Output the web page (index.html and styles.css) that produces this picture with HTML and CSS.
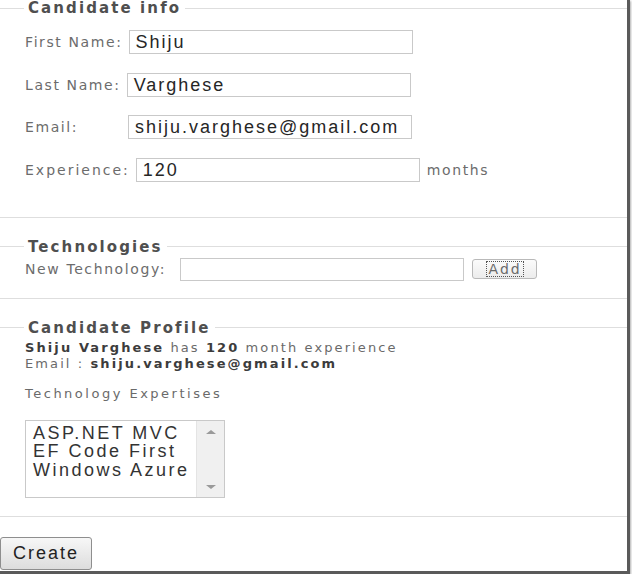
FILE: index.html
```html
<!DOCTYPE html>
<html>
<head>
<meta charset="utf-8">
<title>Candidate</title>
<link rel="stylesheet" href="styles.css">
</head>
<body>
<div class="frame">
  <fieldset class="group group-info">
    <legend class="legend">Candidate info</legend>
    <div class="row">
      <span class="label">First Name:</span>
      <span class="field">Shiju</span>
    </div>
    <div class="row">
      <span class="label">Last Name:</span>
      <span class="field">Varghese</span>
    </div>
    <div class="row">
      <span class="label label-email">Email:</span>
      <span class="field">shiju.varghese@gmail.com</span>
    </div>
    <div class="row">
      <span class="label label-exp">Experience:</span>
      <span class="field">120</span>
      <span class="label unit">months</span>
    </div>
  </fieldset>

  <fieldset class="group group-tech">
    <legend class="legend">Technologies</legend>
    <div class="row row-tech">
      <span class="label">New Technology:</span>
      <span class="field field-tech"></span>
      <span class="add-btn"><span class="add-focus">Add</span></span>
    </div>
  </fieldset>

  <fieldset class="group group-profile">
    <legend class="legend">Candidate Profile</legend>
    <p class="profile-line"><b class="strong">Shiju Varghese</b> has <b class="strong">120</b> month experience</p>
    <p class="profile-line">Email : <b class="strong">shiju.varghese@gmail.com</b></p>
    <p class="profile-sub">Technology Expertises</p>
    <div class="listbox">
      <div class="list-items">
        <div class="list-item">ASP.NET MVC</div>
        <div class="list-item">EF Code First</div>
        <div class="list-item">Windows Azure</div>
      </div>
      <div class="scrollbar">
        <span class="arrow arrow-up"></span>
        <span class="arrow arrow-down"></span>
      </div>
    </div>
  </fieldset>

  <div class="actions">
    <span class="create-btn">Create</span>
  </div>
</div>
</body>
</html>
```

FILE: styles.css
```css
html, body {
  margin: 0;
  padding: 0;
  background: #ffffff;
}

.frame {
  width: 627px;
  height: 571px;
  background: #ffffff;
  border-right: 3px solid #5a5a5a;
  border-bottom: 3px solid #5a5a5a;
  box-shadow: 1px 1px 2px #b0b0b0;
  overflow: hidden;
  font-family: "DejaVu Sans", Verdana, sans-serif;
}

.group {
  margin: 0;
  padding: 0 0 0 25px;
  border: none;
  border-top: 1px solid #dedede;
  border-bottom: 1px solid #dedede;
  min-width: 0;
}

.legend {
  margin-left: -1px;
  padding: 0 4px;
  font-family: "DejaVu Sans", Verdana, sans-serif;
  font-weight: bold;
  font-size: 15px;
  line-height: 16px;
  letter-spacing: 2.1px;
  color: #4f4f4f;
}

.group-info {
  padding-bottom: 35px;
}

.group-tech {
  margin-top: 21px;
  padding-bottom: 17px;
}

.group-profile {
  margin-top: 21px;
  padding-bottom: 18px;
}

.row {
  display: flex;
  align-items: center;
  height: 24px;
  margin-top: 18.5px;
}

.group-info .row:first-of-type {
  margin-top: 14px;
}

.row-tech {
  margin-top: 3px;
  height: 23px;
}

.label {
  font-size: 14px;
  letter-spacing: 1.6px;
  color: #6c6c6c;
  white-space: nowrap;
}

.label-email {
  width: 97px;
}

.label-exp {
  letter-spacing: 2px;
}

.unit {
  margin-left: 7px;
}

.field {
  box-sizing: border-box;
  width: 284px;
  height: 24px;
  margin-left: 6px;
  padding: 0 6px;
  border: 1px solid #c9c9c9;
  background: #ffffff;
  font-family: "Liberation Sans", Arial, sans-serif;
  font-size: 18px;
  line-height: 22px;
  letter-spacing: 2px;
  color: #262626;
  white-space: nowrap;
}

.field-tech {
  height: 23px;
  margin-left: 14px;
}

.add-btn {
  box-sizing: border-box;
  display: flex;
  align-items: center;
  justify-content: center;
  width: 65px;
  height: 20px;
  margin-left: 8px;
  border: 1px solid #b9b9b9;
  border-radius: 3px;
  background: linear-gradient(#fbfbfb, #ececec);
}

.add-focus {
  padding: 0 1px 0 2px;
  border: 1px dotted #555555;
  font-size: 14px;
  line-height: 14px;
  letter-spacing: 2px;
  color: #6a6a6a;
}

.profile-line {
  margin: 0;
  font-size: 13px;
  line-height: 16px;
  letter-spacing: 2.1px;
  color: #6a6a6a;
}

.profile-line:first-of-type {
  margin-top: 4px;
}

.strong {
  font-weight: bold;
  color: #3c3c3c;
}

.profile-sub {
  margin: 14px 0 0;
  font-size: 13px;
  line-height: 16px;
  letter-spacing: 2.5px;
  color: #6a6a6a;
}

.listbox {
  box-sizing: border-box;
  display: flex;
  width: 200px;
  height: 78px;
  margin-top: 18px;
  border: 1px solid #c9c9c9;
  background: #ffffff;
}

.list-items {
  flex: 1;
  padding: 3px 0 0 7px;
}

.list-item {
  font-family: "Liberation Sans", Arial, sans-serif;
  font-size: 18px;
  line-height: 18.5px;
  letter-spacing: 2.5px;
  color: #333333;
  white-space: nowrap;
}

.scrollbar {
  width: 27px;
  display: flex;
  flex-direction: column;
  justify-content: space-between;
  align-items: center;
  padding: 9px 0 8px;
  background: #f0f0f0;
  border-left: 1px solid #e4e4e4;
}

.arrow {
  width: 0;
  height: 0;
  border-left: 5px solid transparent;
  border-right: 5px solid transparent;
}

.arrow-up {
  border-bottom: 4px solid #9a9a9a;
}

.arrow-down {
  border-top: 4px solid #9a9a9a;
}

.actions {
  margin-top: 20px;
}

.create-btn {
  box-sizing: border-box;
  display: inline-flex;
  align-items: center;
  justify-content: center;
  width: 92px;
  height: 33px;
  border: 1px solid #8e8e8e;
  border-radius: 3px;
  background: linear-gradient(#f7f7f7, #dddddd);
  font-family: "Liberation Sans", Arial, sans-serif;
  font-size: 18px;
  letter-spacing: 2px;
  color: #222222;
}
```
